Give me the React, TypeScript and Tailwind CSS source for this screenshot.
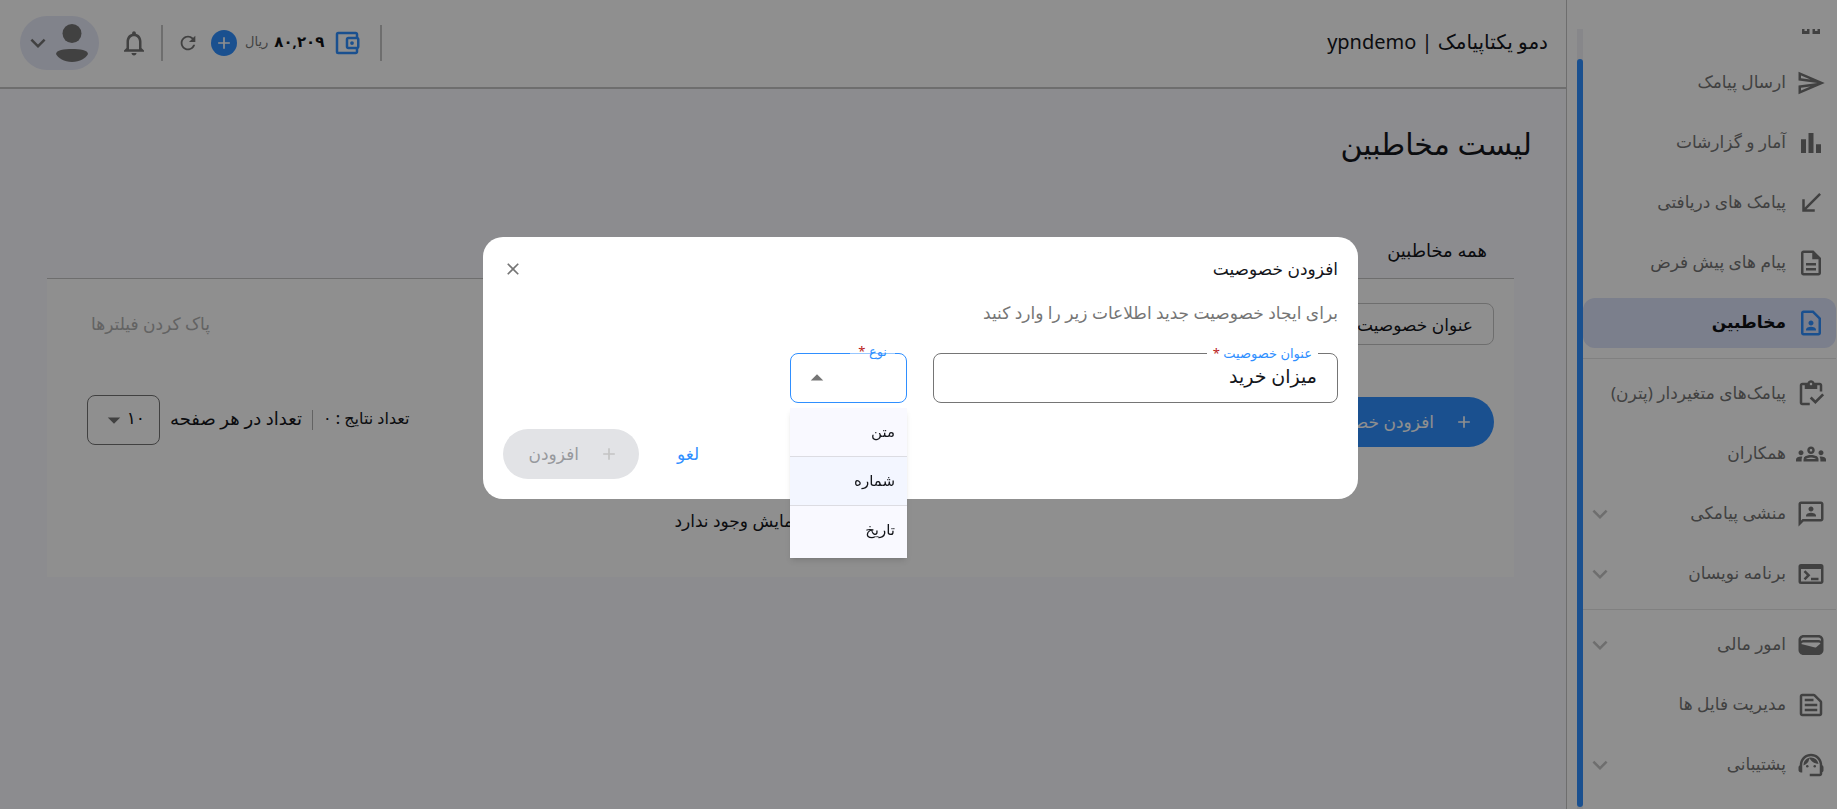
// Hooks
import { useState } from "react";

// Icons
import type { IconType } from "react-icons";
import {
  MdArrowDropDown,
  MdArrowDropUp,
  MdAdd,
  MdCallReceived,
  MdClose,
  MdExpandMore,
  MdOutline3P,
  MdOutlineAccountBalanceWallet,
  MdOutlineContactPage,
  MdOutlineDescription,
  MdOutlineGroups,
  MdOutlineInventory,
  MdOutlineNotifications,
  MdOutlineSend,
  MdOutlineSupportAgent,
  MdOutlineTerminal,
  MdOutlineTextSnippet,
  MdRefresh,
  MdWallet,
} from "react-icons/md";

//=============== TYPES ===============//
type NavItem = {
  name: string;
  icon: IconType;
  active?: boolean;
  expandable?: boolean;
};

//=============== CUSTOM ICONS ===============//
const BarChartIcon: IconType = ({ className }) => (
  <svg viewBox="0 0 24 24" fill="currentColor" className={className}>
    <path d="M4 9h4v11H4zm12 4h4v7h-4zm-6-9h4v16h-4z" />
  </svg>
);

const AvatarIcon = () => (
  <svg viewBox="0 0 32 38" className="h-[38px] w-8" fill="currentColor">
    <circle cx="16" cy="9.5" r="9.5" />
    <path d="M0 30C0 26 8 25 16 25s16 1 16 5C30 34 24 38 16 38S2 34 0 30z" />
  </svg>
);

//=============== DATA ===============//
const navGroups: NavItem[][] = [
  [
    { name: "ارسال پیامک", icon: MdOutlineSend },
    { name: "آمار و گزارشات", icon: BarChartIcon },
    { name: "پیامک های دریافتی", icon: MdCallReceived },
    { name: "پیام های پیش فرض", icon: MdOutlineDescription },
    { name: "مخاطبین", icon: MdOutlineContactPage, active: true },
  ],
  [
    { name: "پیامک‌های متغیردار (پترن)", icon: MdOutlineInventory },
    { name: "همکاران", icon: MdOutlineGroups },
    { name: "منشی پیامکی", icon: MdOutline3P, expandable: true },
    { name: "برنامه نویسان", icon: MdOutlineTerminal, expandable: true },
  ],
  [
    { name: "امور مالی", icon: MdWallet, expandable: true },
    { name: "مدیریت فایل ها", icon: MdOutlineTextSnippet },
    { name: "پشتیبانی", icon: MdOutlineSupportAgent, expandable: true },
  ],
];

const fieldTypes = ["متن", "شماره", "تاریخ"];

//=============== SIDEBAR ===============//
function Sidebar() {
  return (
    <aside className="sticky top-0 flex h-screen w-[271px] shrink-0 border-l border-[#c4c4c4] bg-white pt-[29px]">
      <nav className="min-w-0 flex-1 overflow-hidden pr-px">
        {/*========= DASHBOARD (SCROLLED) =========*/}
        <a href="#" aria-label="داشبورد" className="flex h-[29px] items-start pr-4 text-[#757575]">
          <svg viewBox="0 0 18 5" className="h-[5px] w-[18px]" fill="currentColor">
            <path d="M0 0h2.500v2h2.500V0h2.500v5H0zM10.500 0H13v2h2.500V0H18v5h-7.500z" />
          </svg>
        </a>

        {/*========= LINKS =========*/}
        {navGroups.map((group, index) => (
          <ul
            key={index}
            className={`flex flex-col gap-2.5 ${index > 0 ? "mt-2.5 border-t border-[#e4e4e4] pt-2.5" : ""}`}
          >
            {group.map((item) => (
              <li key={item.name}>
                <a
                  href="#"
                  className={`flex h-[50px] items-center gap-2.5 rounded-xl pr-2.5 pl-0.5 ${
                    item.active ? "bg-[#dbe2f9] font-bold text-[#0f1115]" : "text-[#757575]"
                  }`}
                >
                  <item.icon
                    className={`size-[30px] shrink-0 ${item.active ? "text-[#2f8fff]" : ""}`}
                  />
                  <span className="flex-1 pb-0.5 whitespace-nowrap">{item.name}</span>
                  {item.expandable && (
                    <MdExpandMore className="size-[30px] shrink-0 text-[#c4c4c4]" />
                  )}
                </a>
              </li>
            ))}
          </ul>
        ))}
      </nav>

      {/*========= SCROLLBAR =========*/}
      <div className="ml-2.5 w-1.5 bg-[#f1f1f7] pt-[30px] pb-0.5">
        <div className="h-full rounded-full bg-[#2f8fff]" />
      </div>
    </aside>
  );
}

//=============== HEADER ===============//
function Header() {
  return (
    <header className="flex h-[89px] items-center justify-between border-b-2 border-[#c4c4c4] bg-white pr-[18px] pb-0.5 pl-5">
      <p className="pb-0.5 text-xl text-[#14161b]">دمو یکتاپیامک | ypndemo</p>

      <div className="flex items-center">
        <span className="h-9 w-0.5 bg-[#c4c4c4]" />
        <MdOutlineAccountBalanceWallet className="mr-[18px] size-[30px] text-[#2f8fff]" />
        <p className="mr-2 flex items-center gap-1.5 pb-0.5">
          <span className="text-[15px] font-bold text-[#0f1115]">۸۰,۲۰۹</span>
          <span className="text-[13px] text-[#757575]">ریال</span>
        </p>
        <button
          type="button"
          aria-label="افزایش اعتبار"
          className="mr-2 flex size-[26px] items-center justify-center rounded-full bg-[#2f8fff] text-white"
        >
          <MdAdd className="size-5" />
        </button>
        <button type="button" aria-label="بروزرسانی" className="mr-3 text-[#757575]">
          <MdRefresh className="size-[22px]" />
        </button>
        <span className="mr-[14px] h-9 w-0.5 bg-[#c4c4c4]" />
        <button type="button" aria-label="اعلان ها" className="mr-3 text-[#757575]">
          <MdOutlineNotifications className="size-[30px]" />
        </button>
        <button
          type="button"
          aria-label="حساب کاربری"
          className="mr-5 flex h-[54px] w-[79px] items-center justify-between rounded-full bg-[#e6e9f8] pr-[11px] pl-[3px] text-[#757575]"
        >
          <AvatarIcon />
          <MdExpandMore className="size-[30px]" />
        </button>
      </div>
    </header>
  );
}

//=============== CONTACTS PAGE ===============//
function Contacts() {
  return (
    <div className="pr-[52px] pl-[47px]">
      <h1 className="-mr-[18px] pt-[31px] text-3xl leading-[48px] font-medium text-[#14161b]">
        لیست مخاطبین
      </h1>

      <div className="mt-[57px] flex h-[54px] items-center border-b border-[#c4c4c4] pr-[27px] pb-1">
        <a href="#" className="text-lg text-[#14161b]">
          همه مخاطبین
        </a>
      </div>

      <section className="bg-white px-5 pt-6 pb-11">
        {/*========= FILTERS =========*/}
        <div className="flex items-center justify-between">
          <input
            type="text"
            aria-label="عنوان خصوصیت"
            placeholder="عنوان خصوصیت"
            className="h-[42px] w-[220px] rounded-lg border border-[#c4c4c4] px-5 placeholder:text-[#14161b]"
          />
          <button type="button" className="pl-6 text-[#b0b0b0]">
            پاک کردن فیلترها
          </button>
        </div>

        {/*========= ACTIONS =========*/}
        <div className="mt-[50px] flex h-[54px] items-center justify-between">
          <button
            type="button"
            className="flex h-[50px] w-[220px] items-center gap-5 rounded-full bg-[#2f8fff] pr-5 text-white"
          >
            <MdAdd className="size-5" />
            افزودن خصوصیت
          </button>

          <div className="flex items-center pb-1 pl-5 text-[#14161b]">
            <span className="pb-1 text-base font-medium">تعداد نتایج : ۰</span>
            <span className="mx-2.5 h-5 w-px bg-[#b0b0b0]" />
            <label htmlFor="page-size" className="pb-1 text-lg">
              تعداد در هر صفحه
            </label>
            <div className="relative mr-2.5">
              <select
                id="page-size"
                className="h-[50px] w-[73px] appearance-none rounded-lg border border-[#757575] pr-[14px] pb-1 font-medium"
              >
                <option>۱۰</option>
              </select>
              <MdArrowDropDown className="pointer-events-none absolute top-2.5 left-3 size-[30px] text-[#757575]" />
            </div>
          </div>
        </div>

        <p className="mt-[60px] text-center leading-6 text-[#14161b]">
          موردی برای نمایش وجود ندارد
        </p>
      </section>
    </div>
  );
}

//=============== ADD ATTRIBUTE DIALOG ===============//
function AddAttributeDialog() {
  const [title, setTitle] = useState<string>("میزان خرید");

  return (
    <div className="fixed inset-0 flex items-start justify-center bg-black/44 pt-[237px] pl-1">
      <form
        role="dialog"
        aria-modal="true"
        aria-labelledby="dialog-title"
        className="w-full max-w-[875px] rounded-[20px] bg-white p-5"
      >
        <div className="flex h-6 items-center justify-between">
          <h2 id="dialog-title" className="font-medium text-[#14161b]">
            افزودن خصوصیت
          </h2>
          <button type="button" aria-label="بستن" className="text-[#757575]">
            <MdClose className="size-5" />
          </button>
        </div>

        <p className="mt-5 leading-6 text-[#757575]">
          برای ایجاد خصوصیت جدید اطلاعات زیر را وارد کنید
        </p>

        {/*========= FIELDS =========*/}
        <div className="mt-7 flex gap-[26px]">
          <div className="relative">
            <input
              id="attr-title"
              type="text"
              value={title}
              onChange={(e) => setTitle(e.target.value)}
              className="h-[50px] w-[405px] rounded-lg border border-[#757575] px-5 pb-1 text-[19px] text-[#14161b]"
            />
            <label
              htmlFor="attr-title"
              className="absolute -top-2.5 right-5 bg-white px-1.5 text-[13px] leading-5 text-[#2f8fff]"
            >
              عنوان خصوصیت <span className="text-[#ba1a1a]">*</span>
            </label>
          </div>

          <div className="relative">
            <select
              id="attr-type"
              defaultValue=""
              className="h-[50px] w-[117px] appearance-none rounded-lg border border-[#2f8fff] bg-white"
            >
              <option value=""></option>
              {fieldTypes.map((type) => (
                <option key={type}>{type}</option>
              ))}
            </select>
            <label
              htmlFor="attr-type"
              className="absolute -top-3 right-3 bg-white/50 px-2 text-[13px] leading-5 text-[#2f8fff]"
            >
              نوع <span className="text-[#ba1a1a]">*</span>
            </label>
            <MdArrowDropUp className="pointer-events-none absolute top-2.5 left-3 size-[30px] text-[#757575]" />

            <ul
              role="listbox"
              aria-label="نوع"
              className="absolute top-[55px] left-0 w-full bg-[#f9f9ff] pb-[3px] text-[15px] text-[#14161b] shadow-md"
            >
              {fieldTypes.map((type, index) => (
                <li
                  key={type}
                  role="option"
                  aria-selected={index === 1}
                  className={`flex h-[49px] items-center px-3 pb-0.5 ${
                    index < 2 ? "border-b border-[#dcdce2]" : ""
                  } ${index === 1 ? "bg-[#f3f6ff]" : ""}`}
                >
                  {type}
                </li>
              ))}
            </ul>
          </div>
        </div>

        {/*========= BUTTONS =========*/}
        <div className="mt-[26px] flex items-center justify-end gap-[38px]">
          <button type="button" className="text-[#2f8fff]">
            لغو
          </button>
          <button
            type="submit"
            disabled
            className="flex h-[50px] w-[136px] items-center gap-5 rounded-full bg-[#e2e3e6] pr-5 text-[#97999d]"
          >
            <MdAdd className="size-5 text-[#c4c4c4]" />
            افزودن
          </button>
        </div>
      </form>
    </div>
  );
}

//=============== APP ===============//
export default function App() {
  return (
    <div
      dir="rtl"
      lang="fa"
      className="flex min-h-screen bg-[#f9f9ff] font-['Noto_Sans','DejaVu_Sans',sans-serif] text-[17px]"
    >
      <Sidebar />
      <main className="min-w-0 flex-1">
        <Header />
        <Contacts />
      </main>
      <AddAttributeDialog />
    </div>
  );
}
